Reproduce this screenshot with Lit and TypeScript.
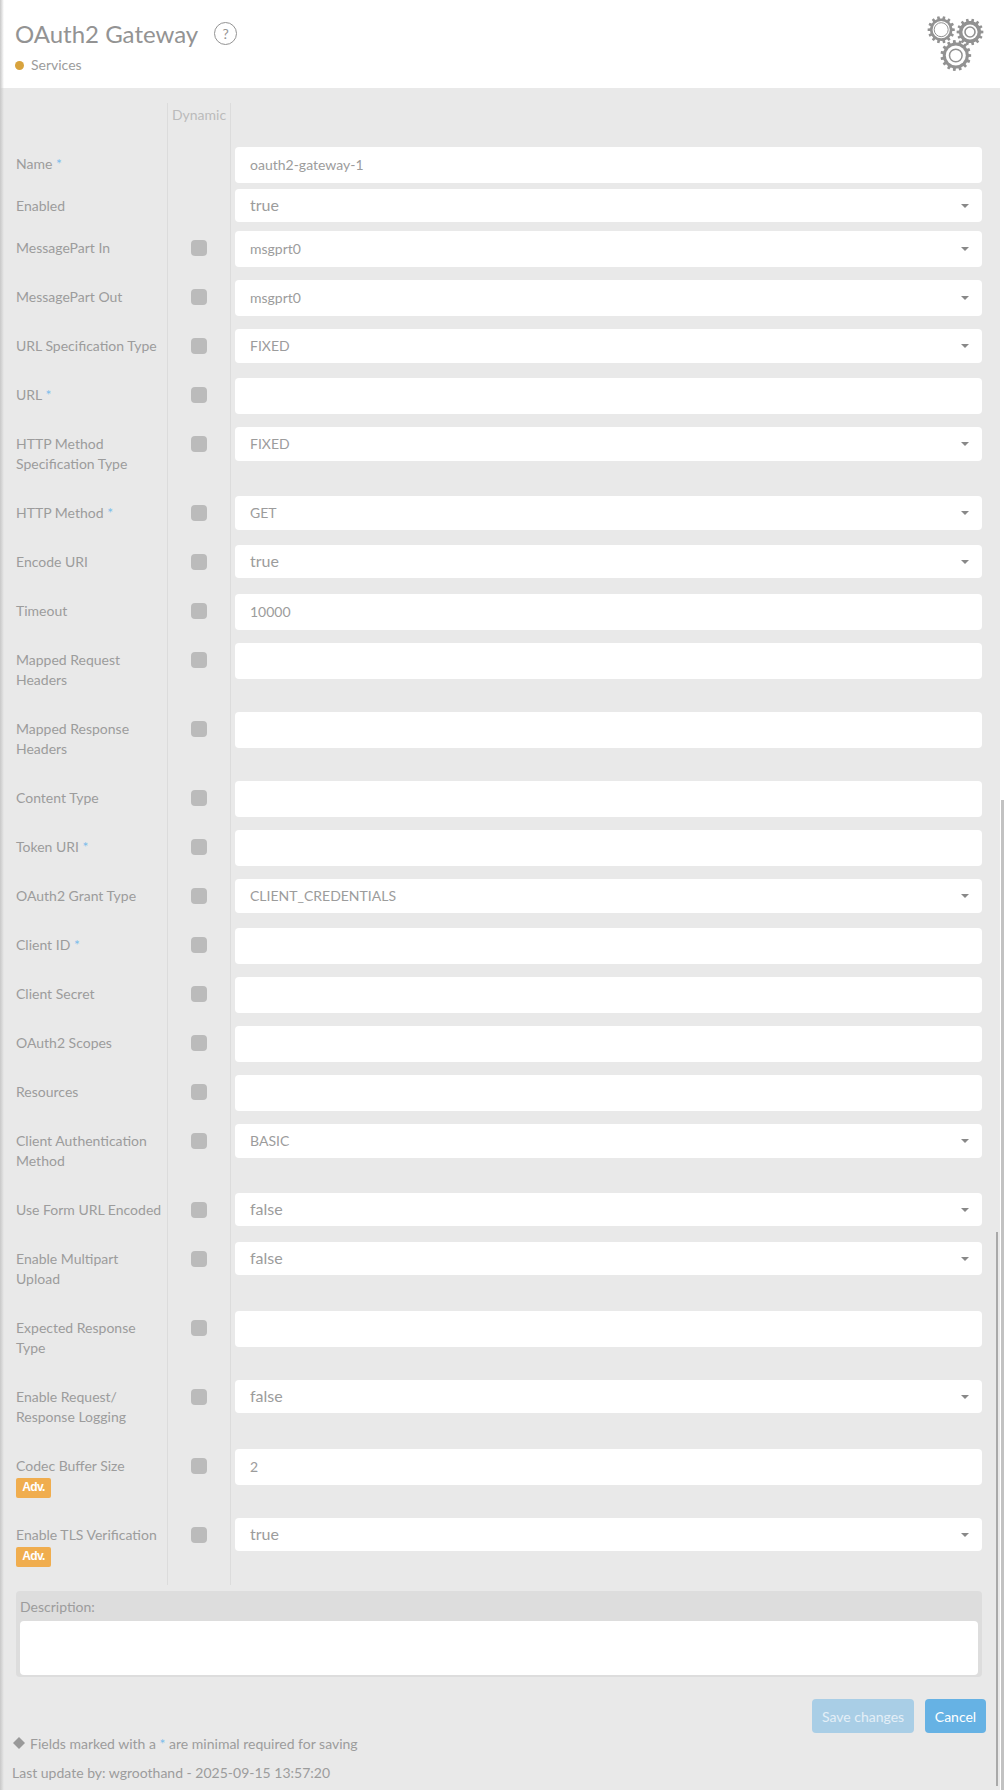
import { LitElement, html, css, svg } from "lit";
import { customElement } from "lit/decorators.js";

type Field = {
  label: string;
  value?: string;
  select?: boolean; // has the little caret
  short?: boolean; // lower box, used by plain selects
  large?: boolean; // true/false values render bigger
  required?: boolean;
  adv?: boolean;
  dynamic?: boolean;
  size?: "small" | "normal" | "tall" | "last";
};

const fixedSelect = (label: string, value: string, extra: Partial<Field> = {}): Field => ({
  label,
  value,
  select: true,
  short: true,
  dynamic: true,
  ...extra,
});
const boolSelect = (label: string, value: string, extra: Partial<Field> = {}): Field =>
  fixedSelect(label, value, { large: true, ...extra });
const input = (label: string, extra: Partial<Field> = {}): Field => ({ label, dynamic: true, ...extra });

const FIELDS: Field[] = [
  { label: "Name", value: "oauth2-gateway-1", required: true, size: "small" },
  boolSelect("Enabled", "true", { dynamic: false, size: "small" }),
  { label: "MessagePart In", value: "msgprt0", select: true, dynamic: true },
  { label: "MessagePart Out", value: "msgprt0", select: true, dynamic: true },
  fixedSelect("URL Specification Type", "FIXED"),
  input("URL", { required: true }),
  fixedSelect("HTTP Method Specification Type", "FIXED", { size: "tall" }),
  fixedSelect("HTTP Method", "GET", { required: true }),
  boolSelect("Encode URI", "true"),
  input("Timeout", { value: "10000" }),
  input("Mapped Request Headers", { size: "tall" }),
  input("Mapped Response Headers", { size: "tall" }),
  input("Content Type"),
  input("Token URI", { required: true }),
  fixedSelect("OAuth2 Grant Type", "CLIENT_CREDENTIALS"),
  input("Client ID", { required: true }),
  input("Client Secret"),
  input("OAuth2 Scopes"),
  input("Resources"),
  fixedSelect("Client Authentication Method", "BASIC", { size: "tall" }),
  boolSelect("Use Form URL Encoded", "false"),
  boolSelect("Enable Multipart Upload", "false", { size: "tall" }),
  input("Expected Response Type", { size: "tall" }),
  boolSelect("Enable Request/\u200bResponse Logging", "false", { size: "tall" }),
  input("Codec Buffer Size", { value: "2", adv: true, size: "tall" }),
  boolSelect("Enable TLS Verification", "true", { adv: true, size: "last" }),
];

// path of a toothed wheel around 0,0
function gearPath(outer: number, root: number, teeth: number) {
  const step = (Math.PI * 2) / teeth;
  let d = "";
  for (let i = 0; i < teeth; i++) {
    const a = i * step;
    const pts: [number, number][] = [
      [root, a - step * 0.5],
      [root, a - step * 0.28],
      [outer, a - step * 0.2],
      [outer, a + step * 0.2],
      [root, a + step * 0.28],
    ];
    for (const [r, t] of pts) {
      d += `${d ? "L" : "M"}${(r * Math.cos(t)).toFixed(2)} ${(r * Math.sin(t)).toFixed(2)}`;
    }
  }
  return d + "Z";
}

function gear(x: number, y: number, outer: number, teeth: number, ring: number, ringW: number, inner: number) {
  return svg`<g transform="translate(${x} ${y})">
    <path d=${gearPath(outer, outer - 2.4, teeth)} fill="#929292"></path>
    <circle r=${ring} fill="#fff"></circle>
    <circle r=${inner} fill="none" stroke="#929292" stroke-width=${ringW}></circle>
  </g>`;
}

@customElement("app-root")
export class AppRoot extends LitElement {
  static styles = css`
    :host {
      display: block;
      position: relative;
      width: 1006px;
      height: 1790px;
      overflow: hidden;
      background: #fff;
      font-family: Lato, "Open Sans", sans-serif;
      font-size: 14px;
      color: #9c9c9c;
    }
    .header {
      height: 88px;
      box-sizing: border-box;
      padding: 21px 16px 0 15px;
      display: flex;
      justify-content: space-between;
      background: #fff;
    }
    .title-line {
      display: flex;
      align-items: center;
      gap: 16px;
      height: 26px;
    }
    h1 {
      margin: 0;
      font-size: 24px;
      font-weight: 400;
      color: #939393;
      line-height: 26px;
    }
    .help {
      width: 21px;
      height: 21px;
      margin-top: -2px;
      border: 1px solid #939393;
      border-radius: 50%;
      display: flex;
      align-items: center;
      justify-content: center;
      font-size: 14px;
      color: #939393;
    }
    .crumb {
      display: flex;
      align-items: center;
      gap: 7px;
      margin-top: 8px;
      line-height: 20px;
    }
    .dot {
      width: 9px;
      height: 9px;
      border-radius: 50%;
      background: #d8a33d;
    }
    .gears {
      margin: -10px 5px 0 0;
      flex: none;
    }
    .page {
      width: 1000px;
      height: 1702px;
      box-sizing: border-box;
      padding-top: 15px;
      background: #e9e9e9;
    }
    .row {
      display: grid;
      grid-template-columns: 167px 64px 1fr;
      height: 49px;
    }
    .row.head {
      height: 44px;
    }
    .row.small {
      height: 42px;
    }
    .row.tall {
      height: 69px;
    }
    .row.last {
      height: 67px;
    }
    .label {
      padding: 7px 2px 0 16px;
      line-height: 20px;
    }
    .req {
      color: #7cbdeb;
    }
    .adv {
      display: block;
      width: 35px;
      height: 20px;
      margin-top: 2px;
      border-radius: 2px;
      background: #f0ad4e;
      color: #fff;
      font-family: "Liberation Sans", sans-serif;
      font-size: 12px;
      font-weight: 700;
      letter-spacing: -0.6px;
      line-height: 19px;
      text-align: center;
    }
    .dyn {
      border-left: 1px solid #dcdcdc;
      border-right: 1px solid #dcdcdc;
      padding-top: 9px;
      display: flex;
      justify-content: center;
    }
    .head .dyn {
      padding-top: 3px;
      color: #bbb;
      line-height: 18px;
    }
    .check {
      width: 16px;
      height: 16px;
      border-radius: 4px;
      background: #bbb;
    }
    .field {
      margin-left: 4px;
      width: 747px;
      height: 36px;
      box-sizing: border-box;
      padding: 0 15px 2px;
      border-radius: 4px;
      background: #fff;
      display: flex;
      align-items: center;
      justify-content: space-between;
    }
    .field.short {
      height: 34px;
    }
    .field.large {
      height: 33px;
      font-size: 16px;
    }
    .caret {
      width: 0;
      height: 0;
      margin: 2px -2px 0 0;
      border-left: 4px solid transparent;
      border-right: 4px solid transparent;
      border-top: 4px solid #888;
    }
    .desc {
      width: 966px;
      height: 86px;
      box-sizing: border-box;
      margin: 6px 0 0 16px;
      padding: 0 4px 2px;
      border-radius: 4px;
      background: #ddd;
      display: flex;
      flex-direction: column;
    }
    .desc span {
      height: 30px;
      line-height: 32px;
    }
    .desc div {
      flex: 1;
      border-radius: 4px;
      background: #fff;
    }
    .actions {
      display: flex;
      justify-content: flex-end;
      gap: 11px;
      margin: 22px 14px 0 0;
    }
    .btn {
      height: 34px;
      box-sizing: border-box;
      border-radius: 4px;
      display: flex;
      align-items: center;
      justify-content: center;
      font-size: 14px;
      color: #fff;
      background: #66b2e4;
      width: 61px;
    }
    .btn.off {
      width: 102px;
      background: #a9cee6;
      color: #e4eff7;
    }
    .note {
      display: flex;
      align-items: center;
      gap: 5px;
      margin-left: 13px;
      height: 20px;
    }
    .updated {
      margin: 10px 0 0 12px;
      line-height: 20px;
    }
    .edge {
      position: absolute;
      left: 0;
      top: 0;
      bottom: 0;
      width: 4px;
      background: linear-gradient(to right, #c8c8c8, rgba(200, 200, 200, 0));
    }
    .bar {
      position: absolute;
      bottom: 0;
    }
    .bar.outer {
      left: 1001px;
      top: 800px;
      width: 3px;
      background: #c2c2c2;
    }
    .bar.inner {
      left: 996px;
      top: 1232px;
      bottom: 4px;
      width: 2px;
      background: #a9a9a9;
    }
  `;

  renderField(f: Field) {
    const sizeClass = f.size ?? "";
    return html`<div class="row ${sizeClass}">
      <div class="label">
        ${f.label}${f.required ? html` <span class="req">*</span>` : ""}
        ${f.adv ? html`<span class="adv">Adv.</span>` : ""}
      </div>
      <div class="dyn">${f.dynamic ? html`<div class="check"></div>` : ""}</div>
      <div>
        <div class="field ${f.short ? "short" : ""} ${f.large ? "large" : ""}">
          <span>${f.value ?? ""}</span>
          ${f.select ? html`<span class="caret"></span>` : ""}
        </div>
      </div>
    </div>`;
  }

  render() {
    return html`
      <div class="header">
        <div>
          <div class="title-line">
            <h1>OAuth2 Gateway</h1>
            <div class="help">?</div>
          </div>
          <div class="crumb"><span class="dot"></span>Services</div>
        </div>
        <svg class="gears" width="60" height="60" viewBox="925 11 60 60">
          ${gear(941.2, 29.7, 13.6, 14, 8.6, 1, 7)}
          ${gear(970, 32, 13.4, 14, 7.6, 1.6, 5)}
          ${gear(955.8, 55.5, 15.4, 15, 10, 1.5, 6.3)}
        </svg>
      </div>
      <div class="page">
        <div class="row head">
          <div></div>
          <div class="dyn">Dynamic</div>
          <div></div>
        </div>
        ${FIELDS.map((f) => this.renderField(f))}
        <div class="desc">
          <span>Description:</span>
          <div></div>
        </div>
        <div class="actions">
          <div class="btn off">Save changes</div>
          <div class="btn">Cancel</div>
        </div>
        <div class="note">
          <svg width="12" height="12" viewBox="0 0 12 12"><path d="M6 0l6 6-6 6-6-6z" fill="#999"></path></svg>
          <span>Fields marked with a <span class="req">*</span> are minimal required for saving</span>
        </div>
        <div class="updated">Last update by: wgroothand - 2025-09-15 13:57:20</div>
      </div>
      <div class="edge"></div>
      <div class="bar outer"></div>
      <div class="bar inner"></div>
    `;
  }
}
